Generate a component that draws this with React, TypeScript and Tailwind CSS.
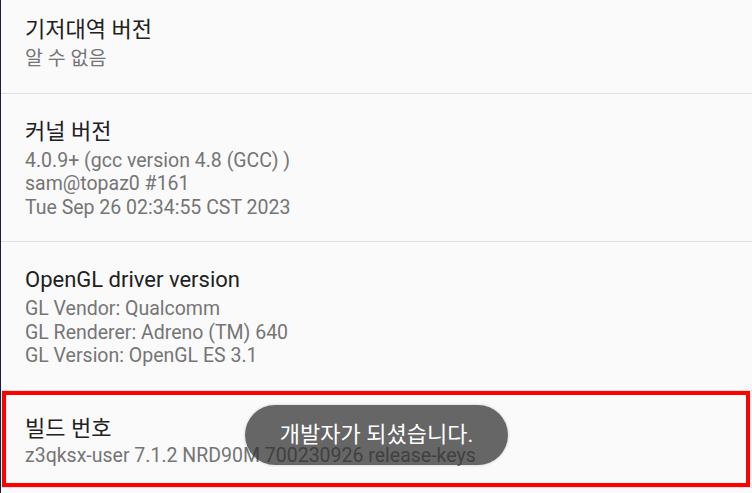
import React from 'react';

type Item = { title: string; lines: string[] };

const items: Item[] = [
    { title: '기저대역 버전', lines: ['알 수 없음'] },
    {
        title: '커널 버전',
        lines: ['4.0.9+ (gcc version 4.8 (GCC) )', 'sam@topaz0 #161', 'Tue Sep 26 02:34:55 CST 2023'],
    },
    {
        title: 'OpenGL driver version',
        lines: ['GL Vendor: Qualcomm', 'GL Renderer: Adreno (TM) 640', 'GL Version: OpenGL ES 3.1'],
    },
];

function Row({ item, first }: { item: Item; first?: boolean }) {
    return (
        <div
            className={`px-6 border-b border-[#e0e0e0] ${first ? 'pt-[15px] pb-[22px]' : 'pt-[23px] pb-[22px]'}`}
        >
            <div className="text-[22px] leading-[30px] text-[#212121]">{item.title}</div>
            <div className="mt-[2px] text-[19.5px] leading-[23.5px] text-[#757575]">
                {item.lines.map((l) => (
                    <div key={l}>{l}</div>
                ))}
            </div>
        </div>
    );
}

export default function App() {
    return (
        <div
            className="w-[752px] h-[493px] overflow-hidden bg-[#fafafa] border-l border-[#1b1b3a] flex flex-col"
            style={{ fontFamily: 'Roboto, "Noto Sans CJK KR", sans-serif' }}
        >
            {items.map((item, i) => (
                <Row key={item.title} item={item} first={i === 0} />
            ))}

            {/* 빌드 번호 (highlighted) */}
            <div className="relative px-6 pt-[23px] pb-[20px] border-b border-[#e0e0e0]">
                <div className="text-[22px] leading-[30px] text-[#212121]">빌드 번호</div>
                <div className="text-[19.5px] leading-[23.5px] text-[#757575]">
                    z3qksx-user 7.1.2 NRD90M 700230926 release-keys
                </div>

                {/* red highlight frame */}
                <div className="absolute left-[1px] right-[2px] top-0 bottom-0 border-4 border-[#ff0000] pointer-events-none" />

                {/* toast */}
                <div className="absolute left-[244px] top-[14px] w-[263px] h-[60px] rounded-full bg-[rgba(45,45,45,0.72)] flex items-center justify-center text-white text-[22px] shadow-[0_0_3px_rgba(0,0,0,0.2)]">
                    개발자가 되셨습니다.
                </div>
            </div>
        </div>
    );
}
